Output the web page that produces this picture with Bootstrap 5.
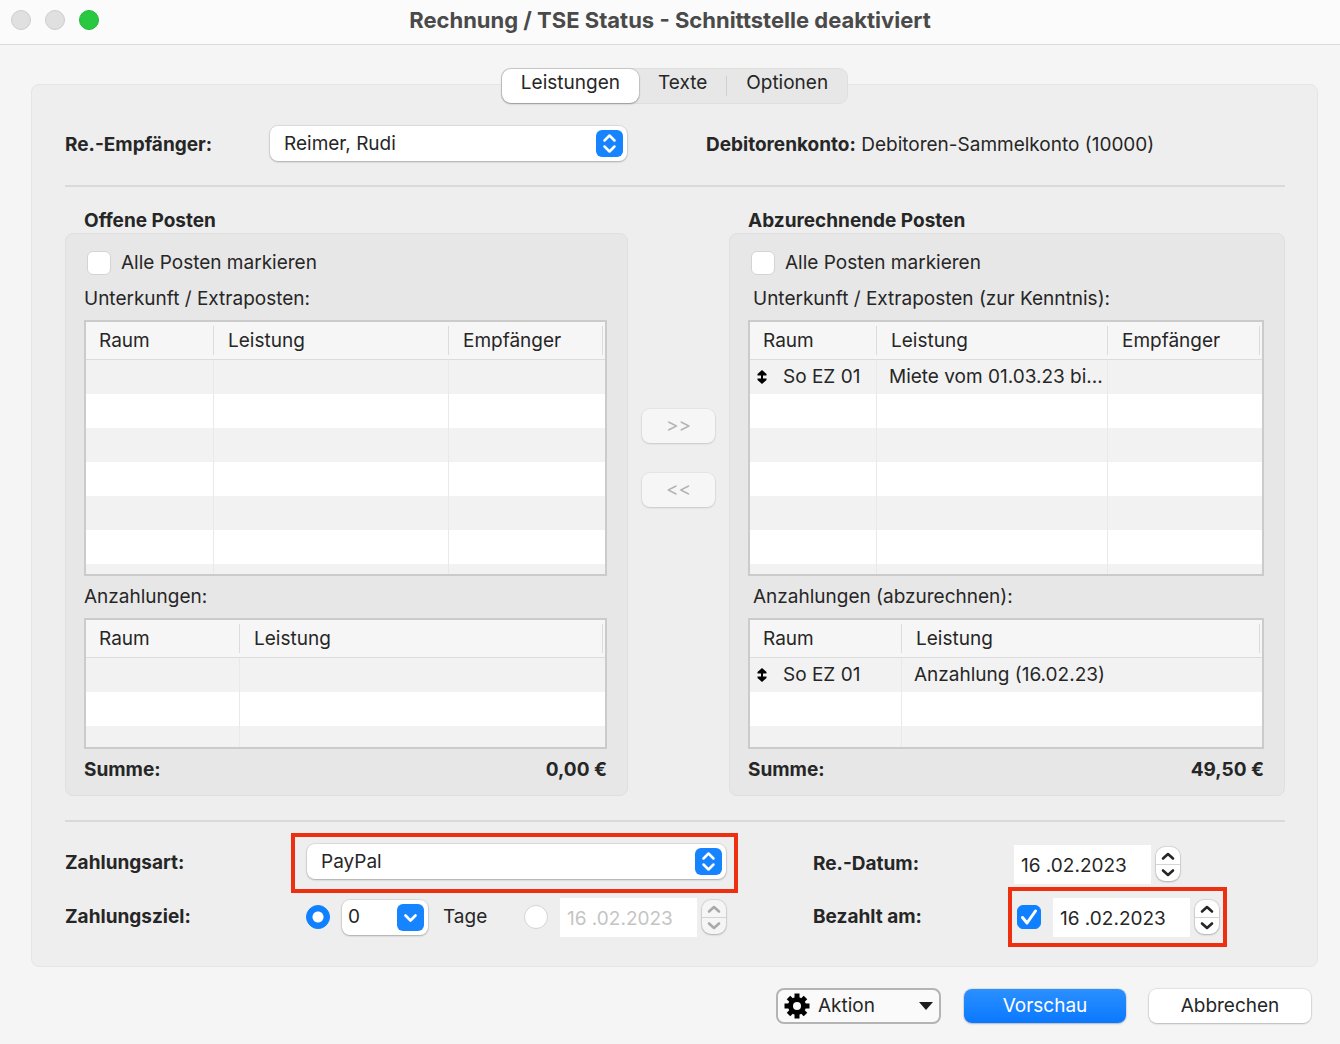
<!DOCTYPE html>
<html lang="de">
<head>
<meta charset="utf-8">
<meta name="viewport" content="width=device-width, initial-scale=1">
<title>Rechnung / TSE Status</title>
<link href="https://cdn.jsdelivr.net/npm/bootstrap@5.3.0/dist/css/bootstrap.min.css" rel="stylesheet">
<style>
body{font-family:Inter,"Liberation Sans",sans-serif;font-size:19px;line-height:24px;font-optical-sizing:none;color:#262626;background:#f5f5f5}
b,.fw-bold{font-weight:700!important}
.titlebar{height:45px;background:#fbfbfb;border-bottom:1px solid #dadada;padding:0 11px 4px}
.titlebar h1{font-size:22px;line-height:28px;font-weight:700;color:#4a4a4a}
.light{width:20px;height:20px;border-radius:50%;background:#e0e0e0;border:1px solid #cdcdcd}
.light.go{background:#28c840;border-color:#24b73a}
.lights{gap:14px;width:100px}
main{padding:23px 22px 0 31px}
.tabs{height:36px;margin-bottom:-20px;z-index:1;background:#e7e7e7;border:1px solid #dfdfdf;border-radius:9px}
.tabs .nav-link{height:34px;padding:2px 19px 8px;color:#262626;line-height:24px;border-radius:9px;border:0;background:transparent}
.tabs .nav-link.active{color:#262626;background:#fff;box-shadow:0 0 1px 1px #0000001c,0 1px 2px #00000040}
.tabs .rule{width:1px;height:20px;background:#cfcfcf}
.panel{background:#eee;border:1px solid #e5e5e5;border-radius:8px;padding:41px 32px 19px 33px}
.panel hr{margin:0;border:0;height:2px;background:#d9d9d9;opacity:1}
.head-label,.head-acct{padding-top:2px}
.head-label{flex:0 0 205px}
.head-pick{flex:357 1 0}
.head-acct{flex:579 1 0;margin-left:79px}
.popup{position:relative}
.popup select{width:100%;height:35px;border:0;border-radius:8px;padding:0 40px 0 14px;font-size:19px;line-height:24px;color:#262626;background:#fff;background-image:none;box-shadow:0 0 1px 1px #00000014,0 1px 2px #00000038}
.popup svg{position:absolute;right:4px;top:4px;pointer-events:none}
.combo{width:86px;margin:0 15px 0 12px}
.combo select{padding-left:6px}
.groups{padding-top:22px}
.grp-left{flex:563 1 0}
.grp-right{flex:556 1 0}
.grp-title{padding-left:19px;font-weight:700;line-height:24px;font-size:19px;margin:0}
.grp{background:#e7e7e7;border:1px solid #dfdfdf;border-radius:8px;padding:17px 20px 13px 18px;gap:9px}
.grp .form-check{min-height:24px;gap:10px;margin-bottom:3px;padding-left:3px}
.form-check-input.tick,.form-check-input.dot{float:none;margin:0;width:24px;height:24px;flex:none;background-color:#fff;border:1px solid #d4d4d4}
.form-check-input.tick{border-radius:6px}
.form-check-input.tick:checked,.form-check-input.dot:checked{background-color:#0f80ff;border-color:#0f80ff}
.form-check-input.dot:checked{background-image:radial-gradient(circle,#fff 0 5px,transparent 6px)}
.tick-wrap{position:relative;height:24px}
.tick-wrap .tick:checked{background-image:none}
.tick-wrap svg{position:absolute;left:0;top:0;pointer-events:none}
.sub-in{padding-left:5px}
.list{border:2px solid #cbcbcb;background:#fff;overflow:hidden}
.list-tall{height:256px}
.list-low{height:131px}
.list table{table-layout:fixed;margin:0;width:100%;border-collapse:separate;border-spacing:0}
.list th{height:38px;padding:0 0 0 14px;font-weight:400;border-bottom:1px solid #dcdcdc;background:linear-gradient(#dcdcdc,#dcdcdc) no-repeat right center/1px 29px #f6f6f6}
.list th:first-child{padding-left:13px}
.list th:last-child{background-position:right 2px center}
.list td{height:34px;padding:0 0 0 12px;white-space:nowrap;border-right:1px solid #e9e9e9}
.list td:last-child{border-right:0}
.list td:first-child{padding-left:7px}
.list tbody tr:nth-child(odd){background:#f2f2f2}
.list td svg{margin-right:16px;vertical-align:-1px}
.mover{flex:0 0 101px;gap:30px;padding:200px 14px 0 14px}
.mac-btn{height:34px;padding:0;border:0;border-radius:8px;background:#fff;font-size:19px;line-height:24px;color:#262626;box-shadow:0 0 1px 1px #00000014,0 1px 2px #00000030}
.mover .mac-btn{background:#f6f6f6;color:#b3b3b3;opacity:1;box-shadow:0 0 1px 1px #0000000a,0 1px 2px #00000020}
.pay-left{flex:673 1 0;padding-top:11px}
.pay-right{flex:472 1 0;margin-left:75px;padding-top:19px}
.pay-left .lbl{flex:0 0 226px}
.pay-right .lbl{flex:0 0 195px}
.marked{height:60px;border:4px solid #ee3010}
.marked-pick{padding:7px 8px 0 12px}
.marked-date{width:219px;padding-left:5px}
.term{height:48px;padding-left:15px}
.term .date{margin-left:12px}
.term .stepper{margin-right:12px}
.date-row{height:46px;padding-left:6px}
.date{width:137px;height:39px;border:0;border-radius:0;background:#fff;padding:2px 0 0 7px;font-size:19px;color:#262626}
.date:disabled{background:#fff;color:#c4c4c4}
.stepper{width:24px;margin-left:5px;border-radius:9px;background:#fff;box-shadow:0 0 1px 1px #00000018,0 1px 2px #00000030}
.stepper .btn{height:17px;padding:0;border:0;line-height:0;color:#262626}
.stepper .btn+.btn{border-top:1px solid #d4d4d4;border-radius:0}
.stepper.off{background:#f5f5f5}
.stepper.off .btn{color:#a9a9a9;opacity:1}
footer{padding:21px 29px 20px;gap:23px}
footer .mac-btn{width:162px}
footer .menu-btn{width:165px;height:36px;border:2px solid #b4b4b4;box-shadow:none;padding:0 6px;background:#fafafa}
footer .go-btn,footer .go-btn:hover{background:linear-gradient(#2b90ff,#0a78ff);color:#fff}
</style>
<script src="https://cdn.jsdelivr.net/npm/bootstrap@5.3.0/dist/js/bootstrap.bundle.min.js"></script>
</head>
<body>
<svg class="d-none" aria-hidden="true">
  <symbol id="updown" viewBox="0 0 27 27"><rect width="27" height="27" rx="6" fill="#1683ff"/><path d="M8.500 10.500 13.500 5.500l5 5M8.500 16.500l5 5 5-5" fill="none" stroke="#fff" stroke-width="2.500" stroke-linecap="round" stroke-linejoin="round"/></symbol>
  <symbol id="down" viewBox="0 0 27 27"><rect width="27" height="27" rx="6" fill="#1683ff"/><path d="M8.500 11.500l5 5 5-5" fill="none" stroke="#fff" stroke-width="2.700" stroke-linecap="round" stroke-linejoin="round"/></symbol>
  <symbol id="up-s" viewBox="0 0 14 10"><path d="M2 7.500 7 3l5 4.500" fill="none" stroke="currentColor" stroke-width="2.600" stroke-linecap="round" stroke-linejoin="round"/></symbol>
  <symbol id="down-s" viewBox="0 0 14 10"><path d="M2 2.500 7 7l5-4.500" fill="none" stroke="currentColor" stroke-width="2.600" stroke-linecap="round" stroke-linejoin="round"/></symbol>
  <symbol id="sort" viewBox="0 0 10 14"><path d="M5 0 9.500 4v1.500H6v3h3.500V10L5 14 .5 10V8.500H4v-3H.5V4z" fill="#000"/></symbol>
</svg>

<header class="titlebar d-flex align-items-center">
  <div class="lights d-flex"><span class="light"></span><span class="light"></span><span class="light go"></span></div>
  <h1 class="flex-grow-1 text-center m-0">Rechnung / TSE Status - Schnittstelle deaktiviert</h1>
  <div class="lights"></div>
</header>

<main>
  <div class="d-flex justify-content-center">
    <div class="tabs nav position-relative align-items-center flex-nowrap" role="tablist">
      <button class="nav-link active" type="button" role="tab" aria-selected="true">Leistungen</button>
      <button class="nav-link" type="button" role="tab" aria-selected="false">Texte</button>
      <span class="rule"></span>
      <button class="nav-link" type="button" role="tab" aria-selected="false">Optionen</button>
    </div>
  </div>

  <section class="panel">
    <div class="d-flex align-items-center">
      <label class="head-label fw-bold" for="recipient">Re.-Empfänger:</label>
      <div class="head-pick popup">
        <select id="recipient" class="form-select"><option>Reimer, Rudi</option></select>
        <svg width="27" height="27" aria-hidden="true"><use href="#updown"/></svg>
      </div>
      <div class="head-acct"><b>Debitorenkonto:</b>&nbsp;Debitoren-Sammelkonto (10000)</div>
    </div>
    <hr class="mt-4">

    <div class="groups d-flex">
      <div class="grp-left">
        <h2 class="grp-title">Offene Posten</h2>
        <div class="grp d-flex flex-column">
          <div class="form-check d-flex align-items-center"><input class="form-check-input tick" type="checkbox" id="all-open"><label for="all-open">Alle Posten markieren</label></div>
          <div>Unterkunft / Extraposten:</div>
          <div class="list list-tall">
            <table>
              <colgroup><col style="width:128px"><col style="width:235px"><col></colgroup>
              <thead><tr><th>Raum</th><th>Leistung</th><th>Empfänger</th></tr></thead>
              <tbody>
                <tr><td></td><td></td><td></td></tr><tr><td></td><td></td><td></td></tr><tr><td></td><td></td><td></td></tr><tr><td></td><td></td><td></td></tr><tr><td></td><td></td><td></td></tr><tr><td></td><td></td><td></td></tr><tr><td></td><td></td><td></td></tr>
              </tbody>
            </table>
          </div>
          <div>Anzahlungen:</div>
          <div class="list list-low">
            <table>
              <colgroup><col style="width:154px"><col></colgroup>
              <thead><tr><th>Raum</th><th>Leistung</th></tr></thead>
              <tbody><tr><td></td><td></td></tr><tr><td></td><td></td></tr><tr><td></td><td></td></tr></tbody>
            </table>
          </div>
          <div class="d-flex justify-content-between fw-bold"><span>Summe:</span><span>0,00 €</span></div>
        </div>
      </div>

      <div class="mover d-flex flex-column">
        <button class="btn mac-btn" type="button" disabled>&gt;&gt;</button>
        <button class="btn mac-btn" type="button" disabled>&lt;&lt;</button>
      </div>

      <div class="grp-right">
        <h2 class="grp-title">Abzurechnende Posten</h2>
        <div class="grp d-flex flex-column">
          <div class="form-check d-flex align-items-center"><input class="form-check-input tick" type="checkbox" id="all-bill"><label for="all-bill">Alle Posten markieren</label></div>
          <div class="sub-in">Unterkunft / Extraposten (zur Kenntnis):</div>
          <div class="list list-tall">
            <table>
              <colgroup><col style="width:127px"><col style="width:231px"><col></colgroup>
              <thead><tr><th>Raum</th><th>Leistung</th><th>Empfänger</th></tr></thead>
              <tbody>
                <tr><td><svg width="10" height="14" aria-hidden="true"><use href="#sort"/></svg>So EZ 01</td><td>Miete vom 01.03.23 bi...</td><td></td></tr>
                <tr><td></td><td></td><td></td></tr><tr><td></td><td></td><td></td></tr><tr><td></td><td></td><td></td></tr><tr><td></td><td></td><td></td></tr><tr><td></td><td></td><td></td></tr><tr><td></td><td></td><td></td></tr>
              </tbody>
            </table>
          </div>
          <div class="sub-in">Anzahlungen (abzurechnen):</div>
          <div class="list list-low">
            <table>
              <colgroup><col style="width:152px"><col></colgroup>
              <thead><tr><th>Raum</th><th>Leistung</th></tr></thead>
              <tbody>
                <tr><td><svg width="10" height="14" aria-hidden="true"><use href="#sort"/></svg>So EZ 01</td><td>Anzahlung (16.02.23)</td></tr>
                <tr><td></td><td></td></tr><tr><td></td><td></td></tr>
              </tbody>
            </table>
          </div>
          <div class="d-flex justify-content-between fw-bold"><span>Summe:</span><span>49,50 €</span></div>
        </div>
      </div>
    </div>

    <hr class="mt-4">
    <div class="d-flex">
      <div class="pay-left">
        <div class="d-flex align-items-center">
          <label class="lbl fw-bold" for="method">Zahlungsart:</label>
          <div class="marked marked-pick flex-grow-1">
            <div class="popup">
              <select id="method" class="form-select"><option>PayPal</option></select>
              <svg width="27" height="27" aria-hidden="true"><use href="#updown"/></svg>
            </div>
          </div>
        </div>
        <div class="d-flex align-items-center">
          <span class="lbl fw-bold">Zahlungsziel:</span>
          <div class="term d-flex align-items-center flex-grow-1">
            <input class="form-check-input dot" type="radio" name="term" id="term-days" aria-label="Zahlungsziel in Tagen" checked>
            <div class="popup combo">
              <select id="days" class="form-select" aria-label="Tage"><option>0</option></select>
              <svg width="27" height="27" aria-hidden="true"><use href="#down"/></svg>
            </div>
            <label for="term-days">Tage</label>
            <input class="form-check-input dot ms-auto" type="radio" name="term" id="term-date" aria-label="Zahlungsziel als Datum">
            <input class="date form-control" type="text" value="16 .02.2023" aria-label="Zahlungsziel Datum" disabled>
            <div class="stepper off d-flex flex-column">
              <button class="btn" type="button" aria-label="Mehr" disabled><svg width="14" height="10"><use href="#up-s"/></svg></button>
              <button class="btn" type="button" aria-label="Weniger" disabled><svg width="14" height="10"><use href="#down-s"/></svg></button>
            </div>
          </div>
        </div>
      </div>

      <div class="pay-right">
        <div class="d-flex align-items-center">
          <label class="lbl fw-bold" for="inv-date">Re.-Datum:</label>
          <div class="date-row d-flex align-items-center">
            <input class="date form-control" type="text" id="inv-date" value="16 .02.2023">
            <div class="stepper d-flex flex-column">
              <button class="btn" type="button" aria-label="Mehr"><svg width="14" height="10"><use href="#up-s"/></svg></button>
              <button class="btn" type="button" aria-label="Weniger"><svg width="14" height="10"><use href="#down-s"/></svg></button>
            </div>
          </div>
        </div>
        <div class="d-flex align-items-center">
          <label class="lbl fw-bold" for="paid">Bezahlt am:</label>
          <div class="marked marked-date d-flex align-items-center">
            <div class="tick-wrap me-2">
              <input class="form-check-input tick d-block" type="checkbox" id="paid" checked>
              <svg width="24" height="24" aria-hidden="true"><path d="M5.500 12.500 10 18 18.500 6" fill="none" stroke="#fff" stroke-width="3" stroke-linecap="round" stroke-linejoin="round"/></svg>
            </div>
            <input class="date form-control ms-1" type="text" value="16 .02.2023" aria-label="Bezahlt am Datum">
            <div class="stepper d-flex flex-column">
              <button class="btn" type="button" aria-label="Mehr"><svg width="14" height="10"><use href="#up-s"/></svg></button>
              <button class="btn" type="button" aria-label="Weniger"><svg width="14" height="10"><use href="#down-s"/></svg></button>
            </div>
          </div>
        </div>
      </div>
    </div>
  </section>
</main>

<footer class="d-flex justify-content-end align-items-center">
  <button class="btn mac-btn menu-btn d-flex align-items-center" type="button">
    <svg width="26" height="26" viewBox="-13 -13 26 26" aria-hidden="true">
      <g fill="#000"><rect x="-2.500" y="-12.500" width="5" height="25"/><rect x="-12.500" y="-2.500" width="25" height="5"/><rect x="-2.500" y="-12" width="5" height="24" transform="rotate(45)"/><rect x="-2.500" y="-12" width="5" height="24" transform="rotate(-45)"/><circle r="9"/></g><circle r="4" fill="#fafafa"/>
    </svg>
    <span class="ms-2">Aktion</span>
    <svg class="ms-auto" width="14" height="8" aria-hidden="true"><path d="M0 0h14L7 8z" fill="#1c1c1c"/></svg>
  </button>
  <button class="btn mac-btn go-btn" type="button">Vorschau</button>
  <button class="btn mac-btn" type="button">Abbrechen</button>
</footer>
</body>
</html>
